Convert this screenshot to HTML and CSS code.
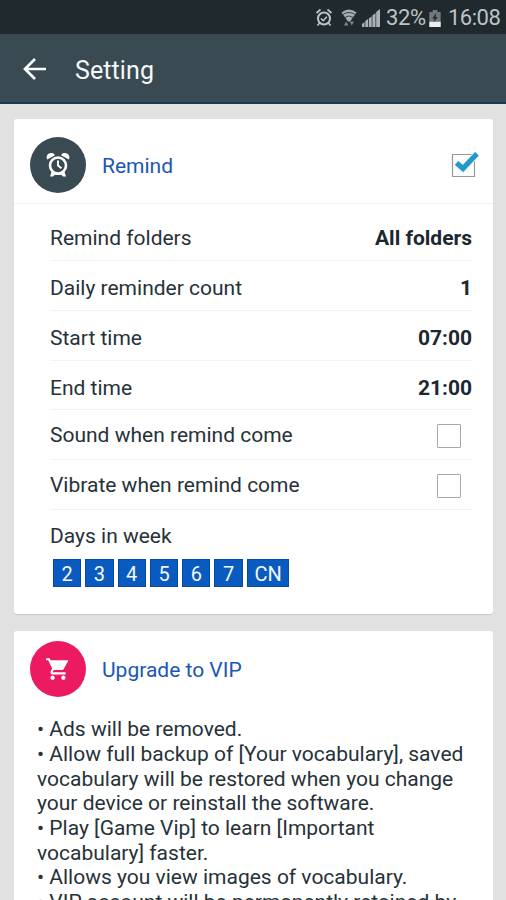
FILE: index.html
```
<!DOCTYPE html>
<html lang="en">
<head>
<meta charset="utf-8">
<title>Setting</title>
<link rel="stylesheet" href="styles.css">
</head>
<body>
<div class="status">
  <svg class="s-alarm" width="18" height="20" viewBox="0 0 18 20" fill="none" stroke="#bfc3c5"><circle cx="9" cy="10.500" r="6" stroke-width="2"/><path d="M1.500 5l4-3.500M16.500 5l-4-3.500M4.500 15l-2 2.500M13.500 15l2 2.500" stroke-width="1.700"/><path d="M5.800 10.500l2.500 2.200 3.500-4" stroke-width="1.600"/></svg>
  <svg class="s-wifi" width="18" height="20" viewBox="0 0 18 20"><path d="M1.500 4.500Q9-1.500 16.500 4.500L10 13.500H8z" fill="#a8adaf"/><path d="M2.800 6.500Q9 2.500 15.200 6.500M4.800 9.400Q9 6.500 13.200 9.400" fill="none" stroke="#30393d" stroke-width=".9"/><path d="M4 17.500h4.400l-2.200-4zM9.600 13.500h4.400l-2.200 4z" fill="#81878a"/></svg>
  <svg class="s-signal" width="18" height="19" viewBox="0 0 18 19" fill="#aeb2b4"><path d="M0 18v-3l2.500-2v5zM3.300 18v-6l2.700-2v8zM6.800 18V9.500l2.900-2V18zM10.400 18V6.500l3.100-2.500v14zM14.200 18V3L18 0v18z"/></svg>
  <span class="pct">32%</span>
  <svg class="s-batt" width="12" height="17" viewBox="0 0 12 18"><path d="M3.500 0h5v2H12v16H0V2h3.500z" fill="#71797c"/><path d="M0 12.500h12V18H0z" fill="#eceeee"/><path d="M7.500 3L3 9h2.500L4.500 13 9 7.500H6.500z" fill="#20292e"/></svg>
  <span class="clock">16:08</span>
</div>
<header class="bar">
  <svg width="24" height="24" viewBox="0 0 24 24" fill="none" stroke="#fff" stroke-width="2.700"><path d="M24 12H3M13 2L3 12l10 10"/></svg>
  <h1>Setting</h1>
</header>
<main>
  <section class="card remind">
    <div class="head">
      <span class="disc"><svg width="24" height="26" viewBox="0 0 24 26"><path d="M1.200 7.500A4.400 4.400 0 0 1 9 3.200zM22.800 7.500A4.400 4.400 0 0 0 15 3.200zM5.500 20h13l1.500 4.500h-3l-1.500-1.500h-7L7 24.500H4z" fill="#fff"/><circle cx="12" cy="13.500" r="8" fill="#3a4a53" stroke="#fff" stroke-width="2.600"/><path d="M12 8.500v5l3.500 2.800" fill="none" stroke="#fff" stroke-width="2"/></svg></span>
      <h2>Remind</h2>
      <svg class="checked" width="28" height="26" viewBox="0 0 28 26"><path d="M1.500 2.500h22v22h-22z" fill="#fbfdfe" stroke="#999" stroke-width="1.200"/><path d="M6 11.500l6 5.500L25.500 2" fill="none" stroke="#dff3fb" stroke-width="7"/><path d="M5.500 10.800l6.500 5.700L26 1.800" fill="none" stroke="#2496c8" stroke-width="5"/></svg>
    </div>
    <div class="rows">
      <div class="row first"><span>Remind folders</span><b>All folders</b></div>
      <div class="row"><span>Daily reminder count</span><b>1</b></div>
      <div class="row"><span>Start time</span><b>07:00</b></div>
      <div class="row end"><span>End time</span><b>21:00</b></div>
      <div class="row check"><span>Sound when remind come</span><i class="box"></i></div>
      <div class="row check"><span>Vibrate when remind come</span><i class="box"></i></div>
      <div class="days-label">Days in week</div>
      <div class="days"><span>2</span><span>3</span><span>4</span><span>5</span><span>6</span><span>7</span><span class="cn">CN</span></div>
    </div>
  </section>
  <section class="card vip">
    <div class="head">
      <span class="disc pink"><svg width="26" height="26" viewBox="0 0 24 24" fill="#fff"><path d="M7 18c-1.100 0-1.990.9-1.990 2S5.900 22 7 22s2-.9 2-2-.9-2-2-2zM1 2v2h2l3.600 7.590-1.350 2.450C4.520 15.370 5.480 17 7 17h12v-2H7.420c-.14 0-.25-.11-.25-.25l.03-.12.9-1.630h7.450c.75 0 1.410-.41 1.750-1.030L21.700 4H5.210L4.270 2H1zm16 16c-1.100 0-1.990.9-1.990 2s.89 2 1.990 2 2-.9 2-2-.9-2-2-2z"/></svg></span>
      <h2>Upgrade to VIP</h2>
    </div>
    <div class="benefits">
      <p>• Ads will be removed.</p>
      <p>• Allow full backup of [Your vocabulary], saved<br>vocabulary will be restored when you change<br>your device or reinstall the software.</p>
      <p>• Play [Game Vip] to learn [Important<br>vocabulary] faster.</p>
      <p>• Allows you view images of vocabulary.</p>
      <p>• VIP account will be permanently retained by</p>
    </div>
  </section>
</main>
</body>
</html>
```
FILE: styles.css
```
* { box-sizing: border-box; margin: 0; padding: 0; }
body {
  width: 506px;
  height: 900px;
  overflow: hidden;
  background: #e1e1e1;
  color: #263238;
  font-family: Roboto, "Liberation Sans", sans-serif;
  font-size: 21px;
  line-height: 24.65px;
}
.status {
  height: 34px;
  padding: 2px 6px 0 0;
  display: flex;
  align-items: center;
  justify-content: flex-end;
  background: #20292e;
  color: #bfc3c5;
  font-size: 22px;
}
.s-alarm { margin-right: 7px; }
.s-wifi { margin-right: 4px; }
.s-signal { margin-right: 6px; }
.pct { width: 39px; white-space: nowrap; letter-spacing: -0.4px; }
.s-batt { margin: 0 7px 0 4px; }
.clock { width: 52px; white-space: nowrap; letter-spacing: -0.5px; }
.bar {
  height: 70px;
  display: flex;
  align-items: center;
  padding: 2px 0 0 22px;
  background: #3a4a53;
  border-bottom: 2px solid #173a4d;
  color: #f5f7f8;
}
.bar h1 { margin: 3px 0 0 29px; font-size: 25px; font-weight: 400; line-height: 30px; letter-spacing: 0.1px; }
main { padding: 15px 13px 0 14px; }
.card {
  background: #fff;
  border-radius: 3px;
  box-shadow: 0 1px 1px #c8c8c8;
}
.remind { height: 495px; margin-bottom: 17px; }
.vip { height: 269px; border-radius: 3px 3px 0 0; box-shadow: none; }
.head { display: flex; align-items: center; padding: 0 14px 0 16px; }
.remind .head { height: 85px; padding-top: 8px; border-bottom: 1px solid #f0f0f0; }
.vip .head { height: 76px; }
.disc {
  width: 56px;
  height: 56px;
  border-radius: 50%;
  background: #3a4a53;
  display: flex;
  align-items: center;
  justify-content: center;
}
.pink { background: #eb1a61; }
.head h2 { margin: 2px 0 0 16px; font-size: 21px; font-weight: 400; color: #1957b5; }
.checked { margin-left: auto; }
.rows { padding: 0 21px 0 36px; }
.row {
  height: 50px;
  display: flex;
  align-items: center;
  justify-content: space-between;
  padding-top: 5px;
  border-bottom: 1px solid #f3f3f3;
}
.first { height: 57px; padding-top: 12px; }
.end { height: 49px; padding-top: 6px; }
.row b { font-weight: 700; color: #1c2830; }
.check { padding: 2px 11px 0 0; }
.box { width: 24px; height: 24px; border: 1.500px solid #a9a9a9; border-radius: 1px; }
.days-label { margin-top: 14px; }
.days { display: flex; gap: 4px; padding: 10px 0 0 3px; }
.days span {
  width: 28.3px;
  height: 28px;
  background: #0a5bc0;
  border: 1px solid #0747ae;
  color: #f4f8ff;
  font-size: 20px;
  line-height: 28px;
  text-align: center;
}
.days .cn { width: 42.500px; }
.benefits { height: 193px; padding: 10.300px 0 0 23px; overflow: hidden; white-space: nowrap; }
```
